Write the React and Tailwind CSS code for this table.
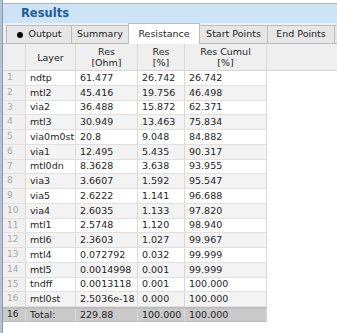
import { useState } from 'react'

// Resistance rows, as shown in the results panel
const rows = [
  ['ndtp', '61.477', '26.742', '26.742'],
  ['mtl2', '45.416', '19.756', '46.498'],
  ['via2', '36.488', '15.872', '62.371'],
  ['mtl3', '30.949', '13.463', '75.834'],
  ['via0m0st', '20.8', '9.048', '84.882'],
  ['via1', '12.495', '5.435', '90.317'],
  ['mtl0dn', '8.3628', '3.638', '93.955'],
  ['via3', '3.6607', '1.592', '95.547'],
  ['via5', '2.6222', '1.141', '96.688'],
  ['via4', '2.6035', '1.133', '97.820'],
  ['mtl1', '2.5748', '1.120', '98.940'],
  ['mtl6', '2.3603', '1.027', '99.967'],
  ['mtl4', '0.072792', '0.032', '99.999'],
  ['mtl5', '0.0014998', '0.001', '99.999'],
  ['tndff', '0.0013118', '0.001', '100.000'],
  ['mtl0st', '2.5036e-18', '0.000', '100.000'],
]

const tabs = ['Output', 'Summary', 'Resistance', 'Start Points', 'End Points']
const tabWidths = ['w-[66px]', 'w-[58px]', 'w-[72px]', 'w-[69px]', 'w-[68px]']

const font = { fontFamily: '"DejaVu Sans", Verdana, sans-serif' }

function Cell({ children, className = '' }) {
  return (
    <div className={`h-full flex items-center pl-[4px] border-r border-[#d9d9d9] whitespace-nowrap overflow-hidden ${className}`}>
      {children}
    </div>
  )
}

export default function App() {
  const [active, setActive] = useState('Resistance')
  const cols = 'grid grid-cols-[23px_50px_62px_47px_82px]'

  return (
    <div className="w-[337px] h-[333px] bg-white flex overflow-hidden text-[9.5px] text-[#1e1e1e]" style={font}>
      {/* Fensterrand links */}
      <div className="w-[3px] h-full bg-[#b3c3d6] border-r border-[#8d9aab]" />

      <div className="flex-1 flex flex-col min-w-0">
        <div className="h-[4px] bg-white border-b border-[#aab4bf]" />

        {/* Titel */}
        <div className="h-[19px] bg-[#cde3f6] flex items-center pl-[18px] text-[11.5px] font-bold text-[#1f5c9c]">
          Results
        </div>

        {/* Tabs */}
        <div className="h-[21px] bg-[#efefef] flex items-end pl-[3px] border-b border-[#bdbdbd]">
          {tabs.map((t, i) => (
            <button
              key={t}
              onClick={() => setActive(t)}
              className={`${tabWidths[i]} shrink-0 flex items-center justify-center gap-[6px] border border-b-0 border-[#bcbcbc] -ml-px first:ml-0 ${
                active === t ? 'h-[21px] bg-white relative top-px' : 'h-[18px] bg-[#e6e6e6]'
              }`}
            >
              {t === 'Output' && <span className="w-[6px] h-[6px] rounded-full bg-black" />}
              {t}
            </button>
          ))}
          <div className="w-[20px] h-[18px] shrink-0 bg-[#e6e6e6] border border-b-0 border-[#bcbcbc] -ml-px" />
        </div>

        {/* Tabelle */}
        <div className="flex flex-col">
          <div className="h-[27px] bg-[#efefef] border-b border-[#d4d4d4] flex">
            <div className={`${cols} h-full text-center leading-[11px]`}>
              <div className="border-r border-[#d9d9d9]" />
              <div className="flex items-center justify-center border-r border-[#d9d9d9]">Layer</div>
              <div className="flex flex-col items-center justify-center border-r border-[#d9d9d9]">
                <span>Res</span>
                <span>[Ohm]</span>
              </div>
              <div className="flex flex-col items-center justify-center border-r border-[#d9d9d9]">
                <span>Res</span>
                <span>[%]</span>
              </div>
              <div className="flex flex-col items-center justify-center border-r border-[#d9d9d9]">
                <span>Res Cumul</span>
                <span>[%]</span>
              </div>
            </div>
          </div>

          {rows.map((r, i) => (
            <div
              key={i}
              className={`${cols} w-[264px] h-[14.75px] border-b border-[#e0e0e0] ${i % 2 ? 'bg-[#f3f3f3]' : 'bg-white'}`}
            >
              <Cell className="bg-[#f0f0f0] text-[9px] text-[#a8a8a8]">{i + 1}</Cell>
              <Cell>{r[0]}</Cell>
              <Cell>{r[1]}</Cell>
              <Cell>{r[2]}</Cell>
              <Cell>{r[3]}</Cell>
            </div>
          ))}

          <div className={`${cols} w-[264px] h-[15px] bg-[#cacaca] border-t-2 border-[#a8a8a8] border-b border-[#bdbdbd]`}>
            <Cell className="border-[#b5b5b5] text-[9px]">16</Cell>
            <Cell className="border-[#b5b5b5]">Total:</Cell>
            <Cell className="border-[#b5b5b5]">229.88</Cell>
            <Cell className="border-[#b5b5b5]">100.000</Cell>
            <Cell className="border-[#b5b5b5]">100.000</Cell>
          </div>
        </div>
      </div>
    </div>
  )
}
